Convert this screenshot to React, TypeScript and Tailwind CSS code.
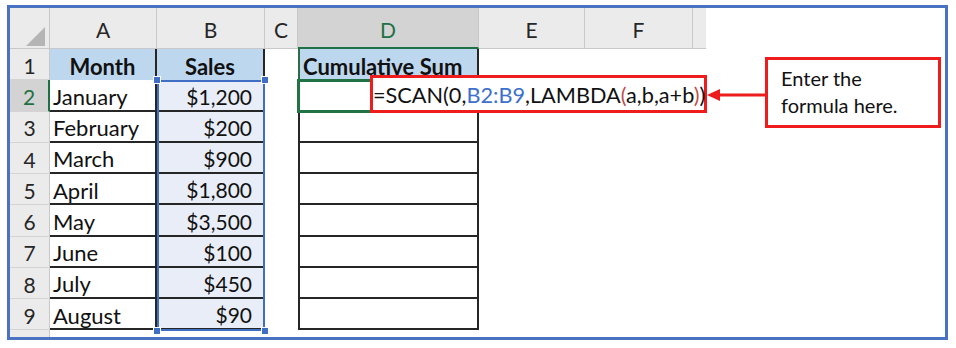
import React from "react";

const months = ["January", "February", "March", "April", "May", "June", "July", "August"];
const sales = ["$1,200", "$200", "$900", "$1,800", "$3,500", "$100", "$450", "$90"];

const F = { fontFamily: "Lato, 'Open Sans', sans-serif" } as React.CSSProperties;

function ColHead({ label, active }: { label: string; active?: boolean }) {
  return (
    <div
      className={
        "flex items-center justify-center border-r border-[#c8c8c8] text-[21px] " +
        (active
          ? "bg-[#d3d3d3] text-[#1e7145] border-b-2 border-b-[#1e7145]"
          : "bg-[#ebebeb] text-[#262626] border-b border-b-[#c8c8c8]")
      }
    >
      <span className="pt-[4px]">{label}</span>
    </div>
  );
}

export default function App() {
  const rows = Array.from({ length: 9 }, (_, i) => i + 1);
  return (
    <div className="w-[956px] h-[348px] bg-white pt-[5px] pl-[7px]" style={F}>
      <div className="relative w-[941px] h-[335px] border-[3px] border-[#4a72c2] overflow-hidden">
        <div className="grid grid-cols-[40px_107px_108px_33px_181px_106px_108px_13px_1fr] grid-rows-[41px_repeat(9,31.25px)_1fr] h-full">
          {/* header row */}
          <div className="relative bg-[#ebebeb] border-r border-b border-[#c8c8c8]">
            <svg className="absolute left-[16px] top-[19px]" width="19" height="19" viewBox="0 0 19 19">
              <polygon points="19,0 19,19 0,19" fill="#b5b5b5" />
            </svg>
          </div>
          <ColHead label="A" />
          <ColHead label="B" />
          <ColHead label="C" />
          <ColHead label="D" active />
          <ColHead label="E" />
          <ColHead label="F" />
          <div className="bg-[#ebebeb] border-b border-[#c8c8c8]" />
          <div className="bg-white" />

          {rows.map((r) => {
            const active = r === 2;
            const cells: React.ReactNode[] = [];
            cells.push(
              <div
                key={"h" + r}
                className={
                  "flex items-center justify-center text-[21px] border-b border-b-[#d4d4d4] " +
                  (active
                    ? "bg-[#d3d3d3] text-[#1e7145] border-r-2 border-r-[#1e7145]"
                    : "bg-[#ebebeb] text-[#262626] border-r border-r-[#c8c8c8]")
                }
              >
                <span className="pt-[3px]">{r}</span>
              </div>
            );
            if (r === 1) {
              cells.push(
                <div key="a1" className="flex items-center justify-center bg-[#bdd7ee] border-r-2 border-r-[#262626] text-[22px] font-bold text-[#111]">
                  <span className="pt-[3px]">Month</span>
                </div>,
                <div key="b1" className="flex items-center justify-center bg-[#bdd7ee] border-r-2 border-r-[#262626] text-[22px] font-bold text-[#111]">
                  <span className="pt-[3px]">Sales</span>
                </div>,
                <div key="c1" className="bg-white" />,
                <div key="d1" className="flex items-center bg-[#bdd7ee] border-l-2 border-l-[#2e6b46] border-r-2 border-r-[#262626] text-[22px] font-bold text-[#111] pl-[3px] whitespace-nowrap">
                  <span className="pt-[3px]">Cumulative Sum</span>
                </div>
              );
            } else {
              cells.push(
                <div key={"a" + r} className="flex items-center bg-white border-r-2 border-r-[#262626] border-b-2 border-b-[#262626] text-[22px] text-[#111] pl-[3px]">
                  <span className="pt-[3px]">{months[r - 2]}</span>
                </div>,
                <div key={"b" + r} className="flex items-center justify-end bg-[#e8edf7] border-r-2 border-r-[#262626] border-b-2 border-b-[#262626] text-[21px] text-[#111] pr-[11px]">
                  <span className="pt-[3px]">{sales[r - 2]}</span>
                </div>,
                <div key={"c" + r} className="bg-white" />,
                <div key={"d" + r} className="bg-white border-l-2 border-l-[#262626] border-r-2 border-r-[#262626] border-b-2 border-b-[#262626]" />
              );
            }
            cells.push(
              <div key={"e" + r} className="bg-white" />,
              <div key={"f" + r} className="bg-white" />,
              <div key={"g" + r} className="bg-white" />,
              <div key={"x" + r} className="bg-white" />
            );
            return <React.Fragment key={r}>{cells}</React.Fragment>;
          })}
          {/* row 10 sliver */}
          <div className="bg-[#ebebeb] border-r border-[#c8c8c8]" />
          <div className="col-span-8 bg-white" />
        </div>

        {/* selection on B2:B9 */}
        <div className="absolute left-[147px] top-[72px] w-[108px] h-[251px] border-2 border-[#3f6fc4]" />
        <div className="absolute left-[143px] top-[68px] w-[8px] h-[8px] bg-[#3f6fc4] border border-white" />
        <div className="absolute left-[251px] top-[68px] w-[8px] h-[8px] bg-[#3f6fc4] border border-white" />
        <div className="absolute left-[143px] top-[319px] w-[8px] h-[8px] bg-[#3f6fc4] border border-white" />
        <div className="absolute left-[251px] top-[319px] w-[8px] h-[8px] bg-[#3f6fc4] border border-white" />

        {/* active cell D2 */}
        <div className="absolute left-[287px] top-[71px] w-[183px] h-[34px] border-[3px] border-[#217346]" />

        {/* formula box */}
        <div className="absolute left-[360px] top-[67px] w-[337px] h-[38px] border-[3px] border-[#ee1c1c] bg-white flex items-center text-[21.7px] text-[#111] whitespace-nowrap">
          <span className="pt-[2px]">
            =SCAN(0,<span className="text-[#3d6fcc]">B2:B9</span>,LAMBDA<span className="text-[#c0504d]">(</span>a,b,a+b<span className="text-[#c0504d]">)</span>)
          </span>
        </div>

        {/* arrow */}
        <svg className="absolute left-[697px] top-[79px]" width="60" height="16" viewBox="0 0 60 16">
          <line x1="10" y1="8" x2="60" y2="8" stroke="#ee1c1c" strokeWidth="3" />
          <polygon points="0,8 13,2 13,14" fill="#ee1c1c" />
        </svg>

        {/* callout */}
        <div className="absolute left-[755px] top-[49px] w-[176px] h-[71px] border-[3px] border-[#ee1c1c] bg-white pl-[13px] pt-[5px] text-[20px] leading-[27px] text-[#111]">
          <div>Enter the</div>
          <div>formula here.</div>
        </div>
      </div>
    </div>
  );
}
